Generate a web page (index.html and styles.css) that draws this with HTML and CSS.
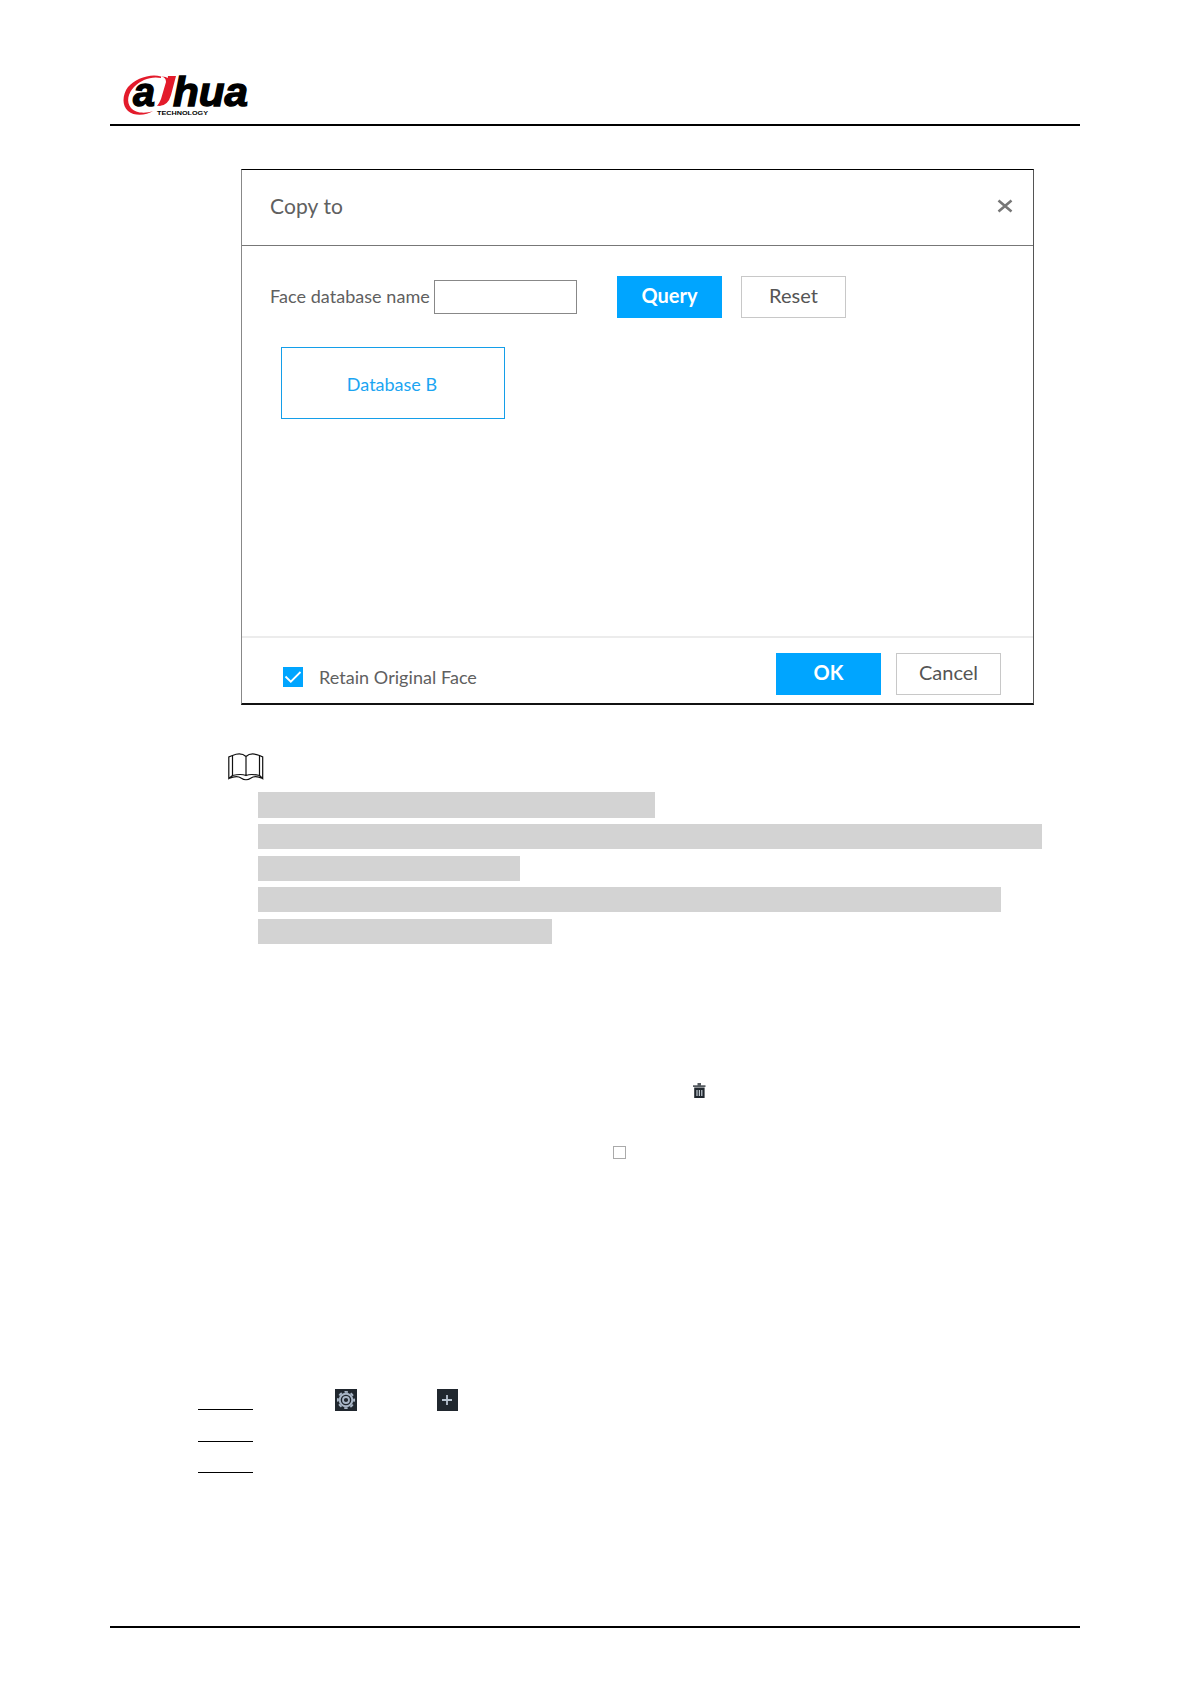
FILE: index.html
```html
<!DOCTYPE html>
<html lang="en">
<head>
    <meta charset="utf-8" />
    <meta name="viewport" content="width=device-width, initial-scale=1" />
    <title>Copy to</title>
    <link rel="stylesheet" href="styles.css">
</head>

<body>
    <div class="page">
        <header class="page-header">
            <svg class="logo" width="130" height="46" viewBox="0 0 130 46">
                <path d="M38 1.5C27-2 12 4 5 12C-1 20-1 31 5 36C12 42 24 40 30 36C22 39 12 38 8 33C3 27 5 18 11 12C18 5 28 1 38 3Z" fill="#e31b2b" />
                <text class="logo-text" x="10" y="30.5" textLength="22" lengthAdjust="spacingAndGlyphs">a</text>
                <path d="M45 1H53L48 20Q45 31 36 31L36 30Q41 27 42 19Z" fill="#e31b2b" />
                <path d="M38 1.5Q43 2 43 7L38 24Q36 29 34 31Q39 31 42 27L47 8Q47 1 38 1.5Z" fill="#e31b2b" />
                <text class="logo-text" x="50" y="30.5" textLength="75" lengthAdjust="spacingAndGlyphs">hua</text>
                <text class="logo-sub" x="34" y="40" textLength="51" lengthAdjust="spacingAndGlyphs">TECHNOLOGY</text>
            </svg>
        </header>

        <div class="dialog">
            <div class="dialog-header">
                <span class="dialog-title">Copy to</span>
                <svg width="16" height="14" viewBox="0 0 16 14">
                    <path d="M1.5 1.5L14.5 12.5M14.5 1.5L1.5 12.5" stroke="#777" stroke-width="2.6" />
                </svg>
            </div>
            <div class="dialog-body">
                <div class="search-row">
                    <label class="label" for="name">Face database name</label>
                    <input class="name-input" id="name" type="text">
                    <button class="btn primary">Query</button>
                    <button class="btn">Reset</button>
                </div>
                <div class="database">Database B</div>
            </div>
            <div class="dialog-footer">
                <svg class="check" width="20" height="20" viewBox="0 0 20 20">
                    <rect width="20" height="20" fill="#00a5ff" />
                    <path d="M2.5 9.5L7.8 14.7L17.5 5" fill="none" stroke="#fff" stroke-width="1.8" />
                </svg>
                <span class="retain">Retain Original Face</span>
                <button class="btn primary ok">OK</button>
                <button class="btn">Cancel</button>
            </div>
        </div>

        <svg class="book" width="36" height="28" viewBox="0 0 36 28" fill="none" stroke="#111">
            <path d="M18 3.5Q13-1 4.5 2.5V22.5Q13 20.5 18 22.5Q23 20.5 31.5 22.5V2.5Q23-1 18 3.5V22.5" stroke-width="1.2" />
            <path d="M4.5 2.5L.8 4V25.5L4.5 22.5M31.5 2.5L34.7 4V25.5L31.5 22.5M.8 25.5Q9 22 13 25Q18 28.5 23 25Q27 22 34.7 25.5" stroke-width="1.2" />
        </svg>

        <div class="notes">
            <div class="note note-1"></div>
            <div class="note note-2"></div>
            <div class="note note-3"></div>
            <div class="note note-4"></div>
            <div class="note note-5"></div>
        </div>

        <svg class="trash" width="13" height="15" viewBox="0 0 13 15">
            <path d="M0 2.2H4.5V0H8V2.2H12.5V4H0Z" fill="#555b60" />
            <path d="M1.2 4.5H11.6V15H1.2Z" fill="#20272e" />
            <path d="M4 7V13M6.4 7V13M8.8 7V13" stroke="#c5ced5" stroke-width="1.2" />
        </svg>
        <div class="empty-box"></div>

        <div class="steps">
            <div class="step">
                <svg class="gear" width="22" height="22" viewBox="0 0 22 22">
                    <rect width="22" height="22" fill="#20272e" />
                    <circle cx="11" cy="11" r="8.1" fill="none" stroke="#a9b6c6" stroke-width="1.9" stroke-dasharray="3.4 2.96" stroke-dashoffset="1.7" />
                    <circle cx="11" cy="11" r="6.3" fill="none" stroke="#a9b6c6" stroke-width="2" />
                    <circle cx="11" cy="11" r="3" fill="none" stroke="#a9b6c6" stroke-width="1.8" />
                </svg>
                <svg class="plus" width="21" height="22" viewBox="0 0 21 22">
                    <rect width="21" height="22" fill="#20272e" />
                    <path d="M5 11H15M10 6V16" stroke="#b8c4d0" stroke-width="1.8" />
                </svg>
            </div>
            <div class="step"></div>
            <div class="step"></div>
        </div>

        <footer class="page-footer"></footer>
    </div>
</body>

</html>
```
FILE: styles.css
```css
* {
    box-sizing: border-box;
}
body {
    margin: 0;
    background-color: #fff;
    font-family: Lato, sans-serif;
}
.page {
    display: flex;
    flex-direction: column;
    width: 1191px;
    height: 1684px;
    padding: 0 111px 56px 110px;
}
svg {
    display: block;
    flex: none;
}

/* header */
.page-header {
    height: 126px;
    padding: 75px 0 0 13px;
    border-bottom: 2px solid #000;
}
.logo {
    overflow: visible;
}
.logo-text {
    font: italic bold 41px "Liberation Sans", sans-serif;
    stroke: #000;
    stroke-width: 1.4px;
}
.logo-sub {
    font: bold 5.8px "Liberation Sans", sans-serif;
}

/* dialog */
.dialog {
    display: flex;
    flex-direction: column;
    width: 793px;
    height: 536px;
    margin: 43px 0 0 131px;
    border: 1px solid #555;
    border-top-color: #000;
    border-bottom: 2px solid #111;
    border-left-color: #888;
    color: #606060;
}
.dialog-header {
    display: flex;
    align-items: center;
    justify-content: space-between;
    height: 76px;
    padding: 0 20px 4px 28px;
    border-bottom: 1px solid #777;
}
.dialog-title {
    font-size: 21px;
    letter-spacing: 0.1px;
}
.dialog-body {
    flex: 1;
    padding: 30px 0 0 28px;
}
.search-row {
    display: flex;
    align-items: center;
    height: 42px;
}
.label {
    width: 164px;
    padding-bottom: 2px;
    font-size: 18px;
    letter-spacing: 0.05px;
    white-space: nowrap;
}
.name-input {
    width: 143px;
    height: 34px;
    margin: 0 40px 0 0;
    border: 1px solid #888;
}
.btn {
    width: 105px;
    height: 42px;
    padding: 0 0 5px;
    border: 1px solid #c8c8c8;
    background-color: #fff;
    color: #555;
    font: 20px Lato, sans-serif;
}
.btn.primary {
    margin-right: 19px;
    border: 0;
    background-color: #00a5ff;
    color: #fff;
    font-weight: bold;
}
.database {
    width: 224px;
    height: 72px;
    margin: 29px 0 0 11px;
    padding-right: 2px;
    border: 1px solid #149ee9;
    color: #1ba5f2;
    font-size: 18px;
    line-height: 72px;
    text-align: center;
}
.dialog-footer {
    display: flex;
    height: 67px;
    padding: 15px 32px 0 41px;
    border-top: 2px solid #ececec;
}
.check {
    margin-top: 14px;
}
.retain {
    margin: 13px 0 0 16px;
    font-size: 18px;
    letter-spacing: 0.05px;
}
.btn.ok {
    margin: 0 15px 0 auto;
}

/* notes */
.book {
    margin: 48px 0 0 118px;
}
.notes {
    margin: 11px 0 0 148px;
}
.note {
    height: 25px;
    margin-bottom: 7px;
    background-color: #d3d3d3;
}
.note-1 {
    width: 397px;
    height: 26px;
    margin-bottom: 6px;
}
.note-2 {
    width: 784px;
}
.note-3 {
    width: 262px;
    margin-bottom: 6px;
}
.note-4 {
    width: 743px;
}
.note-5 {
    width: 294px;
    margin-bottom: 0;
}

.trash {
    margin: 139px 0 0 583px;
}
.empty-box {
    width: 13px;
    height: 13px;
    margin: 48px 0 0 503px;
    border: 1px solid #aaa;
}

/* steps */
.steps {
    margin: 230px 0 0 88px;
}
.step {
    display: flex;
    height: 32px;
}
.step::before {
    content: "";
    width: 55px;
    height: 1px;
    margin-top: 20px;
    background-color: #000;
}
.step:last-child {
    height: 31px;
    margin-top: -1px;
}
.gear {
    margin-left: 82px;
}
.plus {
    margin-left: 80px;
}

.page-footer {
    height: 2px;
    margin-top: auto;
    background-color: #000;
}
```
